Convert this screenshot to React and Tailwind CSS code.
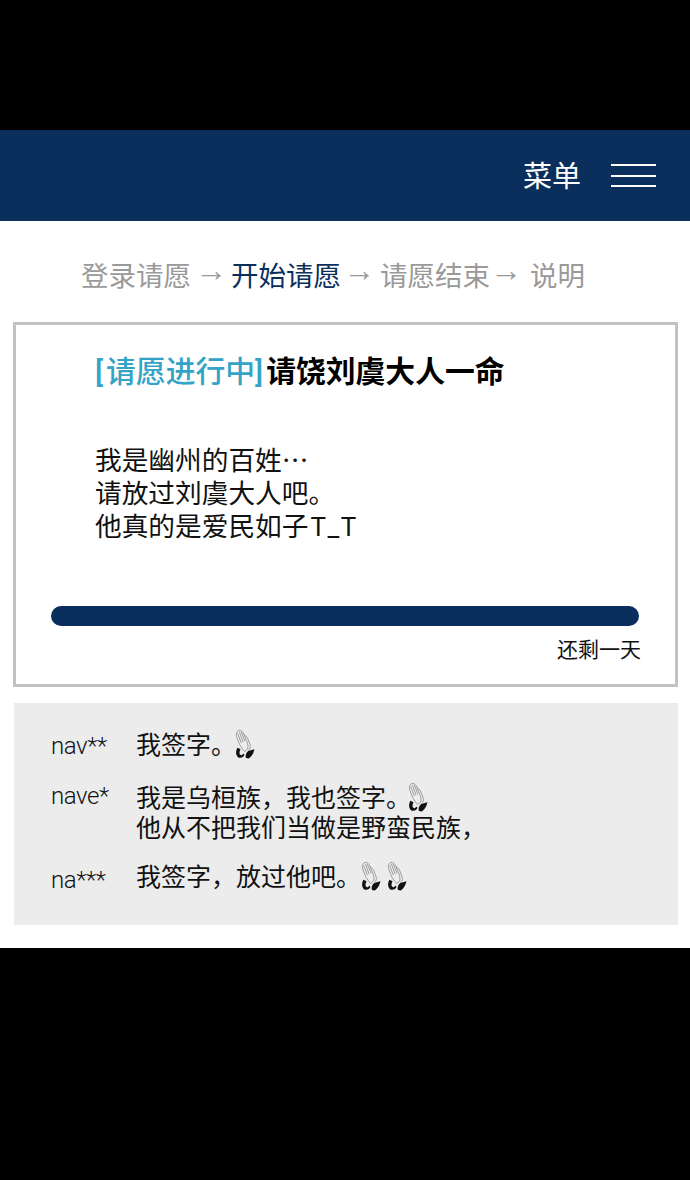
import React from "react";

function Hands({ className = "" }) {
  return (
    <svg viewBox="0 0 22 32" className={`inline-block w-[21px] h-[30px] shrink-0 -translate-y-[2px] ${className}`} aria-hidden="true">
      <g fill="#ededed" stroke="#8f8f8f" strokeWidth="0.9" strokeLinejoin="round">
        <path d="M5 1.5 C7.5 1 9.5 3 10.5 6 L13.5 13.5 C14.5 16 15 18 14.5 21 L11 24 C8.5 20.5 6 18 5 14.5 L2.5 8 C1.8 5 3 2.3 5 1.5 Z" />
        <path d="M5.5 3 L9.5 14 M3.6 4.5 L7.6 15 M7.5 3 L11.5 13" fill="none" />
        <path d="M10.5 6 L14 9 L17 17 C17.8 19.5 17 21.5 15 23" fill="none" />
      </g>
      <path d="M3.5 20 C1.5 23 1.5 27 3.5 29.5 C6 32 10 30.5 11 27.5 L9.6 26 C9 28 7 28.5 6 27 C5.3 25.5 5.8 23 6.8 21.5 Z" fill="#111" />
      <path d="M12.5 31 C11.5 28 13 25 15 23.5 L21.5 21.5 C21 25 18.5 29.5 15.5 31.5 Z" fill="#111" />
    </svg>
  );
}

function Comment({ name, children, nameClass = "" }) {
  return (
    <div className="flex">
      <div className={`w-[85px] shrink-0 text-[24px] font-light leading-[30px] tracking-[-0.4px] ${nameClass}`}>{name}</div>
      <div className="text-[25px] leading-[30px]">{children}</div>
    </div>
  );
}

function Arrow({ className = "" }) {
  return <span className={`font-['Liberation_Sans'] text-[32px] leading-none -translate-y-[7px] ${className}`}>→</span>;
}

export default function App() {
  return (
    <div className="w-[690px] h-[1180px] bg-black flex flex-col pt-[130px] text-[#111] font-['Roboto','Noto_Sans_CJK_SC',sans-serif]">
      <header className="h-[91px] bg-[#0b2f5c] flex items-center justify-end pr-[34px] gap-[30px]">
        <span className="text-white text-[29px] leading-none pt-[4px]">菜单</span>
        <div className="w-[45px] flex flex-col gap-[8.5px]">
          <div className="h-[2px] bg-white" />
          <div className="h-[2px] bg-white" />
          <div className="h-[2px] bg-white" />
        </div>
      </header>

      <main className="h-[727px] bg-white px-[13px] flex flex-col">
        <nav className="h-[101px] flex items-center pl-[68px] pt-[10px] text-[27.5px] text-[#9a9a9a] whitespace-nowrap">
          <span>登录请愿</span>
          <Arrow className="ml-[4px]" />
          <span className="ml-[4px] text-[#0b2f5c]">开始请愿</span>
          <Arrow className="ml-[2px]" />
          <span className="ml-[5px]">请愿结束</span>
          <Arrow />
          <span className="ml-[8px]">说明</span>
        </nav>

        <section className="w-[665px] h-[365px] border-[3px] border-[#c2c2c2] flex flex-col pl-[79px]">
          <h1 className="mt-[29px] text-[29.8px] leading-[36px] font-bold text-black whitespace-nowrap">
            <span className="text-[#33a3c6] font-medium">
              <span className="mr-[3px]">[</span>请愿进行中<span className="mr-[3px]">]</span>
            </span>
            请饶刘虞大人一命
          </h1>
          <p className="mt-[55px] text-[26.7px] leading-[33px] text-[#111]">
            我是幽州的百姓⋯
            <br />
            请放过刘虞大人吧。
            <br />
            他真的是爱民如子<span className="ml-[2px] text-[26px] tracking-[1.5px]">T_T</span>
          </p>
          <div className="mt-[62px] -ml-[44px] w-[588px] h-[20px] rounded-[10px] bg-[#0b2f5c]" />
          <div className="mt-[10px] w-[590px] -ml-[44px] text-right text-[21px] leading-[28px]">还剩一天</div>
        </section>

        <section className="mt-[16px] ml-[1px] w-[664px] h-[222px] bg-[#ececec] pl-[37px] pt-[28px] flex flex-col">
          <Comment name="nav**">
            <span className="flex items-center">我签字。<Hands className="-ml-[2px]" /></span>
          </Comment>
          <div className="mt-[23px]">
            <Comment name="nave*" nameClass="-mt-[3px]">
              <span className="flex items-center">我是乌桓族，我也签字。<Hands className="-ml-[4px]" /></span>
              <span className="block">他从不把我们当做是野蛮民族，</span>
            </Comment>
          </div>
          <div className="mt-[19px]">
            <Comment name="na***" nameClass="mt-[2px]">
              <span className="flex items-center">我签字，放过他吧。<Hands className="-ml-[1px]" /><span className="w-[5px]" /><Hands /></span>
            </Comment>
          </div>
        </section>
      </main>
    </div>
  );
}
